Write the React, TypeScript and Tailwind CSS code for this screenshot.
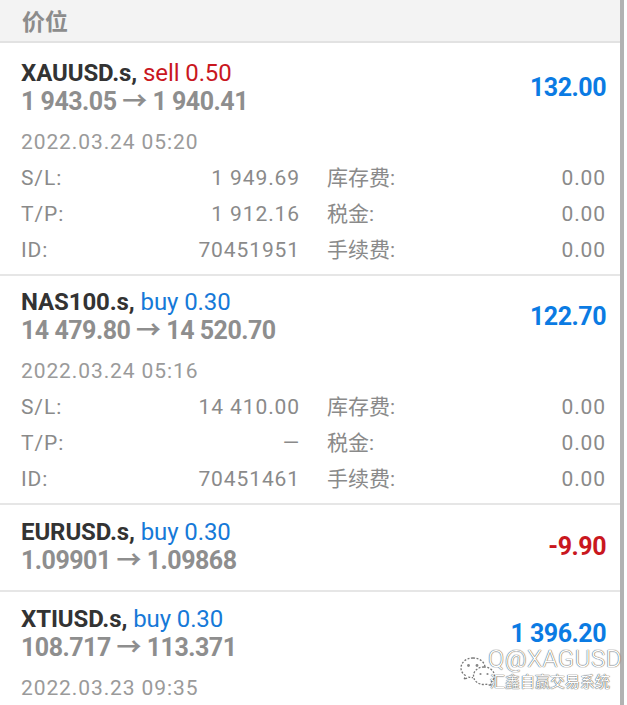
import React from "react";

type Detail = { sl: string; tp: string; id: string };
type Row = {
  symbol: string;
  side: string;
  sideColor: string;
  prices: string;
  profit: string;
  profitColor: string;
  date?: string;
  details?: Detail;
  pt: string;
};

const rows: Row[] = [
  {
    symbol: "XAUUSD.s,",
    side: "sell 0.50",
    sideColor: "text-[#c9171e]",
    prices: "1 943.05 → 1 940.41",
    profit: "132.00",
    profitColor: "text-[#0b7be3]",
    date: "2022.03.24 05:20",
    details: { sl: "1 949.69", tp: "1 912.16", id: "70451951" },
    pt: "pt-[16px]",
  },
  {
    symbol: "NAS100.s,",
    side: "buy 0.30",
    sideColor: "text-[#1679d8]",
    prices: "14 479.80 → 14 520.70",
    profit: "122.70",
    profitColor: "text-[#0b7be3]",
    date: "2022.03.24 05:16",
    details: { sl: "14 410.00", tp: "—", id: "70451461" },
    pt: "pt-[12px]",
  },
  {
    symbol: "EURUSD.s,",
    side: "buy 0.30",
    sideColor: "text-[#1679d8]",
    prices: "1.09901 → 1.09868",
    profit: "-9.90",
    profitColor: "text-[#c9171e]",
    pt: "pt-[13px]",
  },
  {
    symbol: "XTIUSD.s,",
    side: "buy 0.30",
    sideColor: "text-[#1679d8]",
    prices: "108.717 → 113.371",
    profit: "1 396.20",
    profitColor: "text-[#0b7be3]",
    date: "2022.03.23 09:35",
    pt: "pt-[13px]",
  },
];

const font = "[font-family:Roboto,'Noto_Sans_CJK_SC',sans-serif]";

function Pair({ label, value, cjk }: { label: string; value: string; cjk?: boolean }) {
  return (
    <div className="flex items-center justify-between h-[36px]">
      <span className={cjk ? "" : "tracking-[0.9px]"}>{label}</span>
      <span className="tracking-[0.9px]">{value}</span>
    </div>
  );
}

function Position({ r }: { r: Row }) {
  return (
    <div
      className={`border-b-2 border-[#e6e6e6] pl-[21px] pr-[14px] ${r.pt} ${
        r.details ? "pb-[5px]" : "pb-[14px]"
      }`}
    >
      <div className="flex items-center justify-between">
        <div>
          <div className="text-[24px] leading-[28px] font-bold text-[#333333] tracking-[-0.1px]">
            {r.symbol} <span className={`font-normal ${r.sideColor}`}>{r.side}</span>
          </div>
          <div className="text-[25px] leading-[30px] font-bold text-[#8e8e8e] tracking-[-0.5px]">
            {r.prices}
          </div>
        </div>
        <div className={`text-[25px] leading-[28px] font-bold tracking-[-0.5px] ${r.profitColor}`}>
          {r.profit}
        </div>
      </div>
      {r.date && (
        <div className="mt-[8px] h-[36px] flex items-center text-[21px] tracking-[0.9px] text-[#9a9a9a]">
          {r.date}
        </div>
      )}
      {r.details && (
        <div className="grid grid-cols-2 gap-x-[27px] text-[21px] text-[#8a8a8a]">
          <div>
            <Pair label="S/L:" value={r.details.sl} />
            <Pair label="T/P:" value={r.details.tp} />
            <Pair label="ID:" value={r.details.id} />
          </div>
          <div>
            <Pair cjk label="库存费:" value="0.00" />
            <Pair cjk label="税金:" value="0.00" />
            <Pair cjk label="手续费:" value="0.00" />
          </div>
        </div>
      )}
    </div>
  );
}

function WeChatIcon() {
  return (
    <svg width="40" height="36" viewBox="0 0 40 36" fill="none">
      <path
        d="M15 4C8 4 3 8.5 3 14c0 3 1.6 5.6 4.2 7.4L6.2 25.5l4.6-2.4c1.3.4 2.7.6 4.2.6"
        stroke="#777"
        strokeWidth="1.3"
        strokeDasharray="2 1.5"
      />
      <path d="M15 4c6.5 0 11.6 4 12 9" stroke="#777" strokeWidth="1.3" strokeDasharray="2 1.5" />
      <path
        d="M26 13c-6 0-10.5 4-10.5 8.8S20 30.5 26 30.5c1.2 0 2.4-.2 3.5-.5l3.8 2-.9-3.4c2.4-1.6 4.1-3.9 4.1-6.6 0-4.8-4.5-9-10.5-9z"
        stroke="#777"
        strokeWidth="1.3"
        strokeDasharray="2 1.5"
      />
      <circle cx="10.5" cy="11.5" r="1.4" fill="#888" />
      <circle cx="19" cy="11.5" r="1.4" fill="#888" />
      <circle cx="22.5" cy="20" r="1.1" fill="#888" />
      <circle cx="29.5" cy="20" r="1.1" fill="#888" />
    </svg>
  );
}

export default function App() {
  return (
    <div className={`relative h-[705px] w-[627px] overflow-hidden bg-white flex ${font}`}>
      <div className="w-[620px] flex flex-col">
        <div className="h-[43px] shrink-0 bg-[#f3f3f3] border-b-2 border-[#e2e2e2] pl-[22px] flex items-center">
          <span className="text-[23px] font-bold text-[#8c8c8c] [font-family:'Noto_Sans_CJK_SC',sans-serif]">
            价位
          </span>
        </div>
        {rows.map((r) => (
          <Position key={r.symbol} r={r} />
        ))}
      </div>
      <div className="w-[4px] h-full bg-[#b2b2b2]" />
      <div className="w-[3px] h-full bg-white" />

      <div className="absolute left-[458px] top-[646px] flex items-start">
        <div className="mt-[8px]">
          <WeChatIcon />
        </div>
        <div className="ml-[-10px] flex flex-col">
          <span className="text-[24px] leading-[26px] font-light tracking-[0.5px] text-white [text-shadow:0_0_1px_#555,0_0_1px_#555]">
            Q@XAGUSD
          </span>
          <span className="ml-[2px] text-[15px] leading-[18px] text-white [text-shadow:0_0_1px_#444,0_0_1px_#444] [font-family:'Noto_Sans_CJK_SC',sans-serif]">
            汇鑫自赢交易系统
          </span>
        </div>
      </div>
    </div>
  );
}
